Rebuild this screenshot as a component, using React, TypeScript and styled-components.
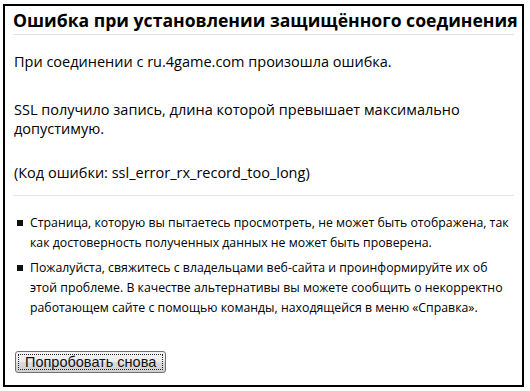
import React from "react";
import styled, { createGlobalStyle } from "styled-components";

const Global = createGlobalStyle`
  html, body { margin: 0; padding: 0; background: #fff; }
  body { font-family: "Open Sans", "Noto Sans", sans-serif; color: #000; }
`;

const Frame = styled.div`
  box-sizing: border-box;
  margin: 4px 0 0 3px;
  width: 521px;
  height: 383px;
  border: 2px solid #000;
  padding: 2px 8px 0 8px;
  display: flex;
  flex-direction: column;
`;

const Title = styled.h1`
  margin: 0;
  font-family: "Open Sans", sans-serif;
  font-weight: 700;
  font-size: 17.6px;
  line-height: 24px;
  padding-bottom: 2px;
  border-bottom: 1px solid #e2e2e2;
  white-space: nowrap;
`;

const Para = styled.p<{ $top: number }>`
  margin: ${(p) => p.$top}px 0 0 1px;
  font-size: 14.5px;
  line-height: 19.5px;
`;

const Divider = styled.hr`
  margin: 13px 0 0 0;
  border: 0;
  border-top: 1px solid #e4e4e4;
  height: 0;
`;

const List = styled.ul`
  margin: 17px 4px 0 0;
  padding: 0 0 0 17px;
  list-style: none;
  display: flex;
  flex-direction: column;
  gap: 5px;
`;

const Item = styled.li`
  position: relative;
  font-size: 12.3px;
  line-height: 20px;
  &::before {
    content: "";
    position: absolute;
    left: -13px;
    top: 7px;
    width: 6px;
    height: 6px;
    background: #111;
  }
`;

const Button = styled.button`
  margin: 33px 0 0 2px;
  align-self: flex-start;
  font-family: "Liberation Sans", Arial, sans-serif;
  font-size: 14.5px;
  color: #111;
  height: 22px;
  padding: 0 9px;
  border: 1px solid #707070;
  border-radius: 3px;
  background: linear-gradient(#f3f3f3 0%, #ebebeb 50%, #dddddd 51%, #cfcfcf 100%);
  outline: 1px dotted #222;
  outline-offset: -4px;
`;

export default function App() {
  return (
    <>
      <Global />
      <Frame>
        <Title>Ошибка при установлении защищённого соединения</Title>
        <Para $top={17}>При соединении с ru.4game.com произошла ошибка.</Para>
        <Para $top={28}>
          SSL получило запись, длина которой превышает максимально допустимую.
        </Para>
        <Para $top={24}>(Код ошибки: ssl_error_rx_record_too_long)</Para>
        <Divider />
        <List>
          <Item>
            Страница, которую вы пытаетесь просмотреть, не может быть отображена, так
            как достоверность полученных данных не может быть проверена.
          </Item>
          <Item>
            Пожалуйста, свяжитесь с владельцами веб-сайта и проинформируйте их об
            этой проблеме. В качестве альтернативы вы можете сообщить о некорректно
            работающем сайте с помощью команды, находящейся в меню «Справка».
          </Item>
        </List>
        <Button>Попробовать снова</Button>
      </Frame>
    </>
  );
}
